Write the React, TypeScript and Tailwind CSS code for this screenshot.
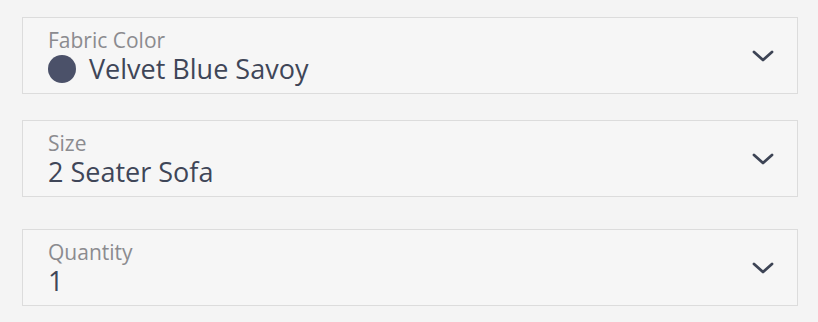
import React from "react";

function Chevron() {
  return (
    <svg width="22" height="14" viewBox="0 0 22 14" fill="none" className="shrink-0">
      <path d="M2 3 L11 11 L20 3" stroke="#3d4455" strokeWidth="2.8" strokeLinecap="round" strokeLinejoin="round" />
    </svg>
  );
}

function Field({ label, value, dot, className }: { label: string; value: string; dot?: boolean; className?: string }) {
  return (
    <div className={"flex h-[77px] items-center justify-between border border-[#dcdcdc] bg-[#f6f6f6] pl-[25px] pr-[23px] " + (className ?? "")}>
      <div className="flex flex-col">
        <div className="text-[21px] leading-[26px] text-[#8b8b8f]">{label}</div>
        <div className="flex items-center gap-[13px] text-[27px] leading-[32px] text-[#3f4658]">
          {dot && <span className="h-[28px] w-[28px] rounded-full bg-[#4b5169]" />}
          <span>{value}</span>
        </div>
      </div>
      <Chevron />
    </div>
  );
}

export default function App() {
  return (
    <div className="h-[322px] w-[818px] bg-[#f4f4f4] pl-[22px] pr-[20px] pt-[17px]" style={{ fontFamily: '"Open Sans", sans-serif' }}>
      <Field label="Fabric Color" value="Velvet Blue Savoy" dot />
      <Field label="Size" value="2 Seater Sofa" className="mt-[26px]" />
      <Field label="Quantity" value="1" className="mt-[32px]" />
    </div>
  );
}
